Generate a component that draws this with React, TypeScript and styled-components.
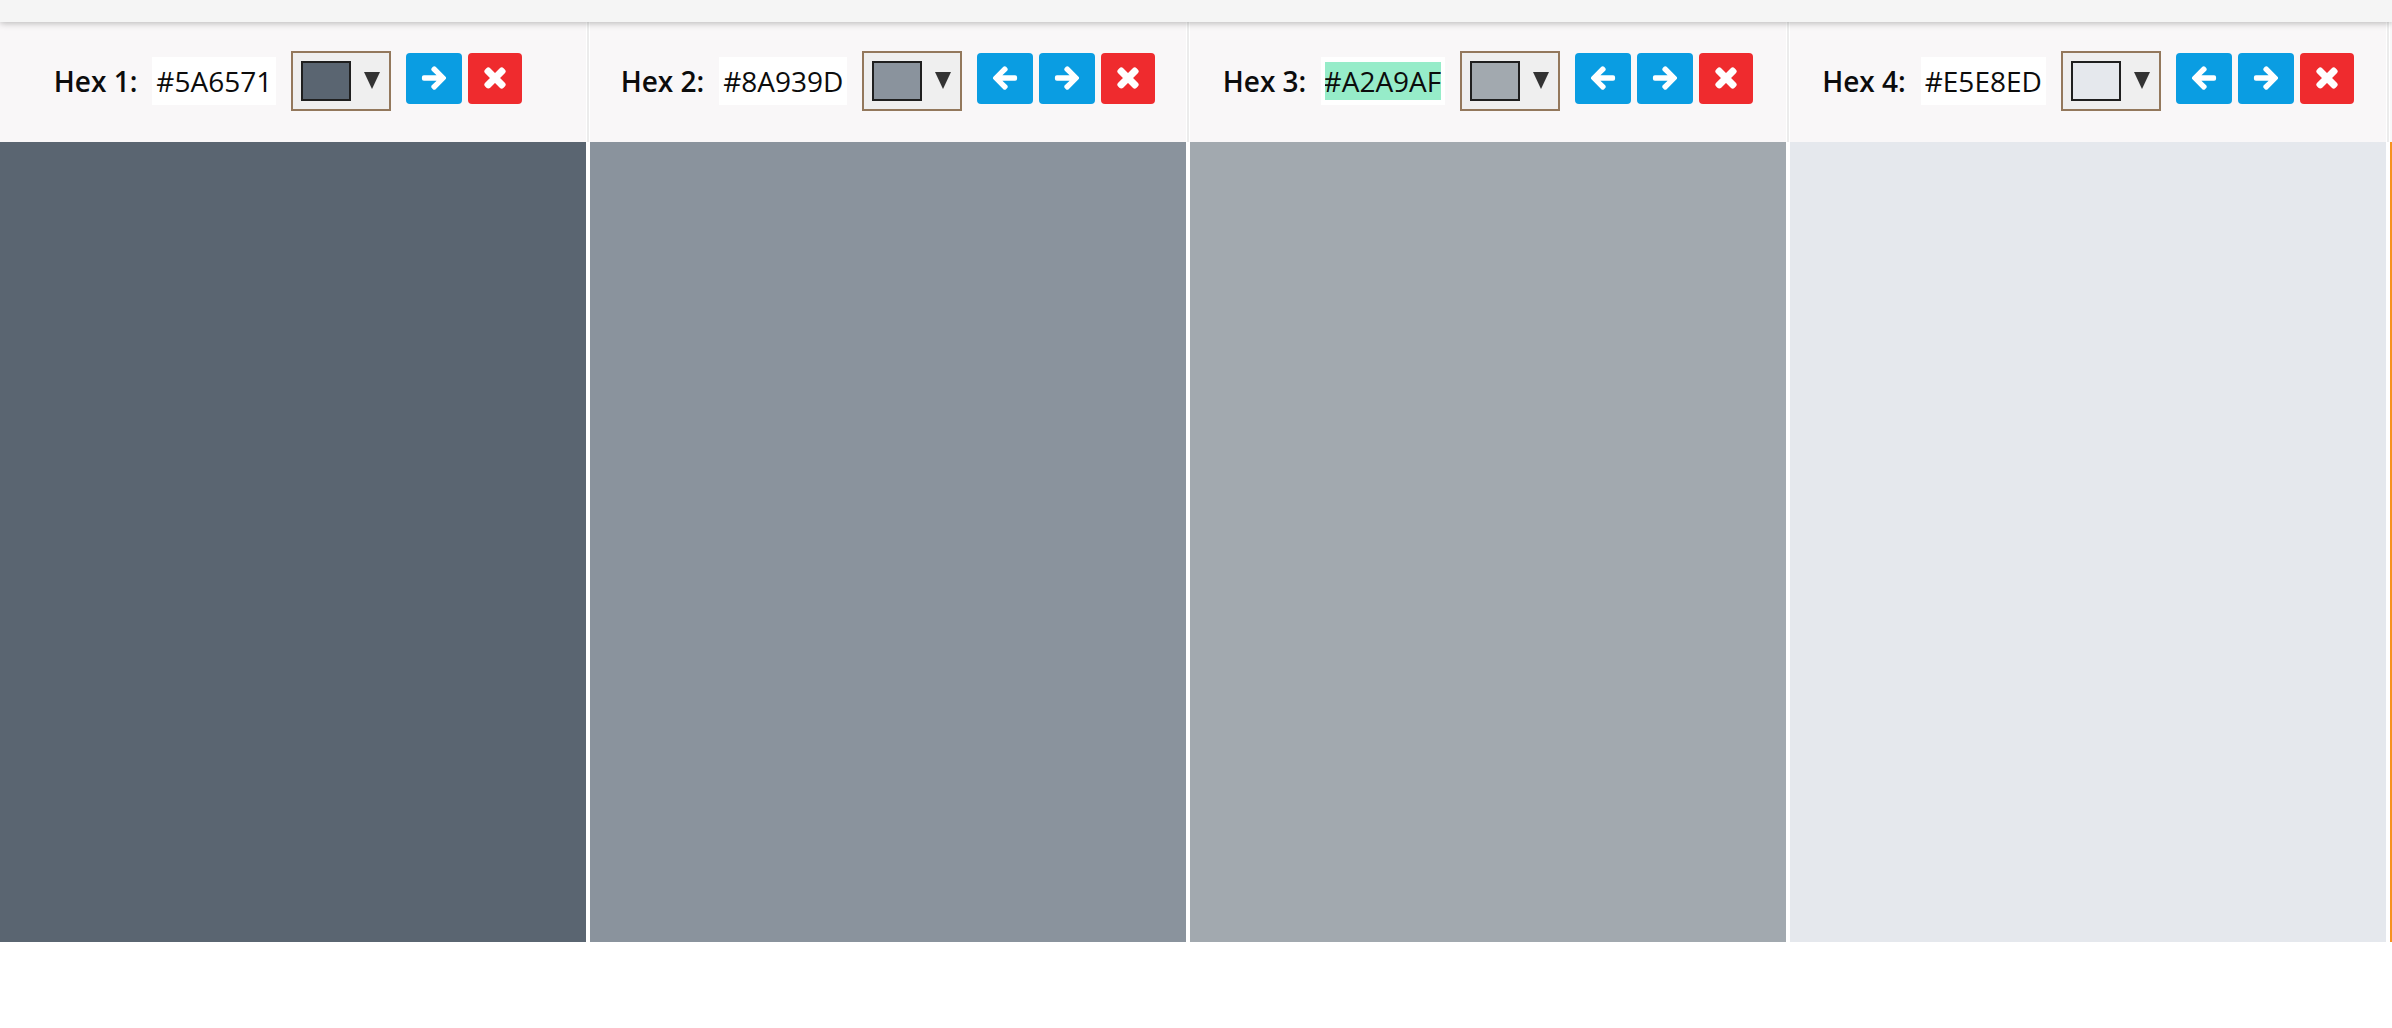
import React from "react";
import styled, { createGlobalStyle } from "styled-components";
import { FaArrowLeft, FaArrowRight, FaTimes } from "react-icons/fa";

const GlobalStyle = createGlobalStyle`
  html, body {
    margin: 0;
    padding: 0;
    background: #ffffff;
    overflow: hidden;
  }
  body {
    font-family: "Open Sans", "Noto Sans", "Liberation Sans", sans-serif;
    color: #111;
  }
`;

const Page = styled.div`
  width: 100%;
  display: flex;
  flex-direction: column;
`;

const TopBar = styled.div`
  height: 22px;
  background: #f5f5f5;
  box-shadow: 0 1px 7px rgba(0, 0, 0, 0.28);
  position: relative;
  z-index: 2;
`;

const Strip = styled.div`
  display: flex;
  gap: 4px;
  margin-left: -10px;
  background: #ffffff;
`;

const Column = styled.section`
  flex: 0 0 596px;
  width: 596px;
  display: flex;
  flex-direction: column;
`;

const Header = styled.header`
  height: 120px;
  background: #f9f7f8;
  display: flex;
  align-items: center;
  justify-content: center;
  box-shadow: 1px 0 0 #ffffff, 3px 0 0 #ececec;
  padding-bottom: 3px;
  box-sizing: border-box;
`;

const Label = styled.span`
  font-size: 28px;
  font-weight: 600;
  white-space: nowrap;
  margin-right: 15px;
  color: #0c0c0c;
`;

const HexField = styled.div<{ $scrolled?: boolean }>`
  max-width: ${(p) => (p.$scrolled ? "116px" : "none")};
  height: 48px;
  padding: 0 4px;
  background: #ffffff;
  display: flex;
  align-items: center;
  margin-right: 15px;
`;

const HexText = styled.div<{ $scrolled?: boolean }>`
  flex: 1;
  overflow: hidden;
  display: flex;
  justify-content: ${(p) => (p.$scrolled ? "flex-end" : "flex-start")};
  font-size: 28px;
  line-height: 38px;
  white-space: nowrap;
  color: #0c0c0c;
`;

const Selected = styled.span`
  background: #96ecc9;
  flex: none;
`;

const Plain = styled.span`
  flex: none;
`;

const Picker = styled.div`
  width: 100px;
  height: 60px;
  box-sizing: border-box;
  border: 2px solid #93785c;
  background: #efefef;
  display: flex;
  align-items: center;
  padding-left: 8px;
  margin-right: 15px;
`;

const PickerSwatch = styled.div<{ $color: string }>`
  width: 50px;
  height: 40px;
  box-sizing: border-box;
  border: 2px solid #1f1f1f;
  background: ${(p) => p.$color};
  margin-right: 13px;
`;

const Caret = styled.span`
  width: 0;
  height: 0;
  border-left: 8px solid transparent;
  border-right: 8px solid transparent;
  border-top: 17px solid #333333;
  margin-top: -1px;
`;

const Buttons = styled.div`
  display: flex;
  gap: 6px;
  margin-top: -5px;
`;

const IconButton = styled.button<{ $variant: "move" | "remove" }>`
  width: ${(p) => (p.$variant === "remove" ? "54px" : "56px")};
  height: 51px;
  border: none;
  border-radius: 4px;
  padding: 0;
  display: flex;
  align-items: center;
  justify-content: center;
  color: #ffffff;
  background: ${(p) => (p.$variant === "remove" ? "#ef2b2e" : "#0a9de2")};
  cursor: pointer;

  svg {
    stroke: currentColor;
    stroke-linejoin: round;
  }
`;

const Swatch = styled.div<{ $color: string }>`
  height: 800px;
  background: ${(p) => p.$color};
`;

type ColorItem = { hex: string; color: string; visible: boolean };

const colors: ColorItem[] = [
  { hex: "#5A6571", color: "#5a6571", visible: true },
  { hex: "#8A939D", color: "#8a939d", visible: true },
  { hex: "#A2A9AF", color: "#a2a9af", visible: true },
  { hex: "#E5E8ED", color: "#e5e8ed", visible: true },
  { hex: "#F7931E", color: "#f7931e", visible: false },
];

export default function App() {
  return (
    <Page>
      <GlobalStyle />
      <TopBar />
      <Strip>
        {colors.map((c, i) => {
          const selected = i === 2;
          return (
            <Column key={c.hex}>
              <Header>
                {c.visible && (
                  <>
                    <Label>Hex {i + 1}:</Label>
                    <HexField $scrolled={selected}>
                      <HexText $scrolled={selected}>
                        {selected ? <Selected>{c.hex}</Selected> : <Plain>{c.hex}</Plain>}
                      </HexText>
                    </HexField>
                    <Picker>
                      <PickerSwatch $color={c.color} />
                      <Caret />
                    </Picker>
                    <Buttons>
                      {i > 0 && (
                        <IconButton $variant="move" aria-label="Move left">
                          <FaArrowLeft size={26} strokeWidth={28} />
                        </IconButton>
                      )}
                      <IconButton $variant="move" aria-label="Move right">
                        <FaArrowRight size={26} strokeWidth={28} />
                      </IconButton>
                      <IconButton $variant="remove" aria-label="Remove">
                        <FaTimes size={28} strokeWidth={36} />
                      </IconButton>
                    </Buttons>
                  </>
                )}
              </Header>
              <Swatch $color={c.color} />
            </Column>
          );
        })}
      </Strip>
    </Page>
  );
}
